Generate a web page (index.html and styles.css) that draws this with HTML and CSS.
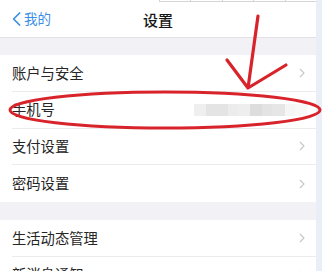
FILE: index.html
```html
<!DOCTYPE html>
<html lang="zh-CN">
<head>
<meta charset="utf-8">
<title>设置</title>
<link rel="stylesheet" href="styles.css">
</head>
<body>
<div class="page">
  <div class="screen">
    <header class="nav">
      <a class="back">
        <svg class="back-icon" width="9" height="14" viewBox="0 0 9 14"><path d="M7.6 1 L1.6 7 L7.6 13" fill="none" stroke="#3a8ee6" stroke-width="1.7" stroke-linecap="round" stroke-linejoin="round"/></svg>
        <span>我的</span>
      </a>
      <h1 class="title">设置</h1>
      <span></span>
    </header>
    <div class="gap"></div>
    <section class="group">
      <div class="row"><div class="row-inner"><span class="label">账户与安全</span><svg class="chev" width="6" height="10" viewBox="0 0 6 10"><path d="M1 1 L5 5 L1 9" fill="none" stroke="#c5c5ca" stroke-width="1.1"/></svg></div></div>
      <div class="row"><div class="row-inner row-phone"><span class="label">手机号</span>
        <span class="blur">
          <i class="b1"></i><i class="b2"></i><i class="b3"></i><i class="b4"></i><i class="b5"></i><i class="b6"></i><i class="b7"></i><i class="b8"></i><i class="b9"></i>
        </span></div></div>
      <div class="row"><div class="row-inner"><span class="label">支付设置</span><svg class="chev" width="6" height="10" viewBox="0 0 6 10"><path d="M1 1 L5 5 L1 9" fill="none" stroke="#c5c5ca" stroke-width="1.1"/></svg></div></div>
      <div class="row"><div class="row-inner last"><span class="label">密码设置</span><svg class="chev" width="6" height="10" viewBox="0 0 6 10"><path d="M1 1 L5 5 L1 9" fill="none" stroke="#c5c5ca" stroke-width="1.1"/></svg></div></div>
    </section>
    <div class="gap gap-2"></div>
    <section class="group">
      <div class="row"><div class="row-inner"><span class="label">生活动态管理</span><svg class="chev" width="6" height="10" viewBox="0 0 6 10"><path d="M1 1 L5 5 L1 9" fill="none" stroke="#c5c5ca" stroke-width="1.1"/></svg></div></div>
      <div class="row"><div class="row-inner"><span class="label">新消息通知</span><svg class="chev" width="6" height="10" viewBox="0 0 6 10"><path d="M1 1 L5 5 L1 9" fill="none" stroke="#c5c5ca" stroke-width="1.1"/></svg></div></div>
    </section>
  </div>
  <div class="scroll"></div>
  <div class="ruler"><i></i><i></i><i></i><i></i><i></i></div>
  <svg class="markup" width="322" height="271" viewBox="0 0 322 271">
    <ellipse cx="165" cy="110" rx="155" ry="18" fill="none" stroke="#d8232b" stroke-width="3"/>
    <path d="M258 16 L248 88 M227 60 L248 88 L286 65" fill="none" stroke="#d8232b" stroke-width="3.2" stroke-linecap="round" stroke-linejoin="round"/>
  </svg>
</div>
</body>
</html>
```

FILE: styles.css
```css
* { box-sizing: border-box; }
html, body { margin: 0; padding: 0; }
body {
  width: 322px;
  height: 271px;
  overflow: hidden;
  background: #ffffff;
  font-family: "Noto Sans CJK SC", "Noto Sans", sans-serif;
}
.page {
  position: relative;
  display: flex;
  width: 322px;
  height: 271px;
  overflow: hidden;
}
.screen {
  width: 316px;
  flex: none;
  background: #f2f2f6;
}
.scroll {
  flex: 1;
  background: #eaeef7;
}
.nav {
  height: 38px;
  background: #ffffff;
  border-bottom: 1px solid #e2e2e6;
  display: grid;
  grid-template-columns: 1fr auto 1fr;
  align-items: center;
}
.back {
  display: flex;
  align-items: center;
  gap: 3px;
  padding-left: 12px;
  color: #3a8ee6;
  font-size: 13.5px;
  line-height: 1;
  margin-top: 1px;
}
.back-icon { display: block; }
.title {
  margin: 0;
  font-size: 15px;
  font-weight: 500;
  color: #161616;
  line-height: 1;
  margin-top: 1px;
}
.gap { height: 17px; }
.gap-2 { height: 18px; }
.group { background: #ffffff; }
.row {
  height: 36.75px;
  padding-left: 12px;
}
.row-inner {
  height: 100%;
  display: flex;
  align-items: center;
  justify-content: space-between;
  padding-right: 11px;
  border-bottom: 1px solid #ebebee;
}
.row-inner.last { border-bottom: none; }
.row-phone { padding-right: 9px; }
.label {
  font-size: 14.3px;
  color: #262626;
  line-height: 1;
}
.chev { display: block; }
.blur {
  display: flex;
  height: 12px;
  margin-top: 1px;
}
.blur i { display: block; height: 100%; }
.b1 { width: 12px; background: #efefef; }
.b2 { width: 22px; background: #e4e4e4; }
.b3 { width: 10px; background: #ececec; }
.b4 { width: 12px; background: #eeeeee; }
.b5 { width: 12px; background: #dddddd; }
.b6 { width: 10px; background: #e3e3e3; }
.b7 { width: 13px; background: #e6e6e6; }
.b8 { width: 10px; background: #f5f5f5; }
.b9 { width: 12px; background: #f8f8f8; }
.ruler {
  position: absolute;
  left: 159px;
  top: 0;
  width: 157px;
  height: 2px;
  border-bottom: 1px solid #d4d4d8;
  display: flex;
}
.ruler i {
  display: block;
  width: 33px;
  height: 2px;
  border-left: 1px solid #d4d4d8;
}
.markup {
  position: absolute;
  left: 0;
  top: 0;
  pointer-events: none;
}
```
